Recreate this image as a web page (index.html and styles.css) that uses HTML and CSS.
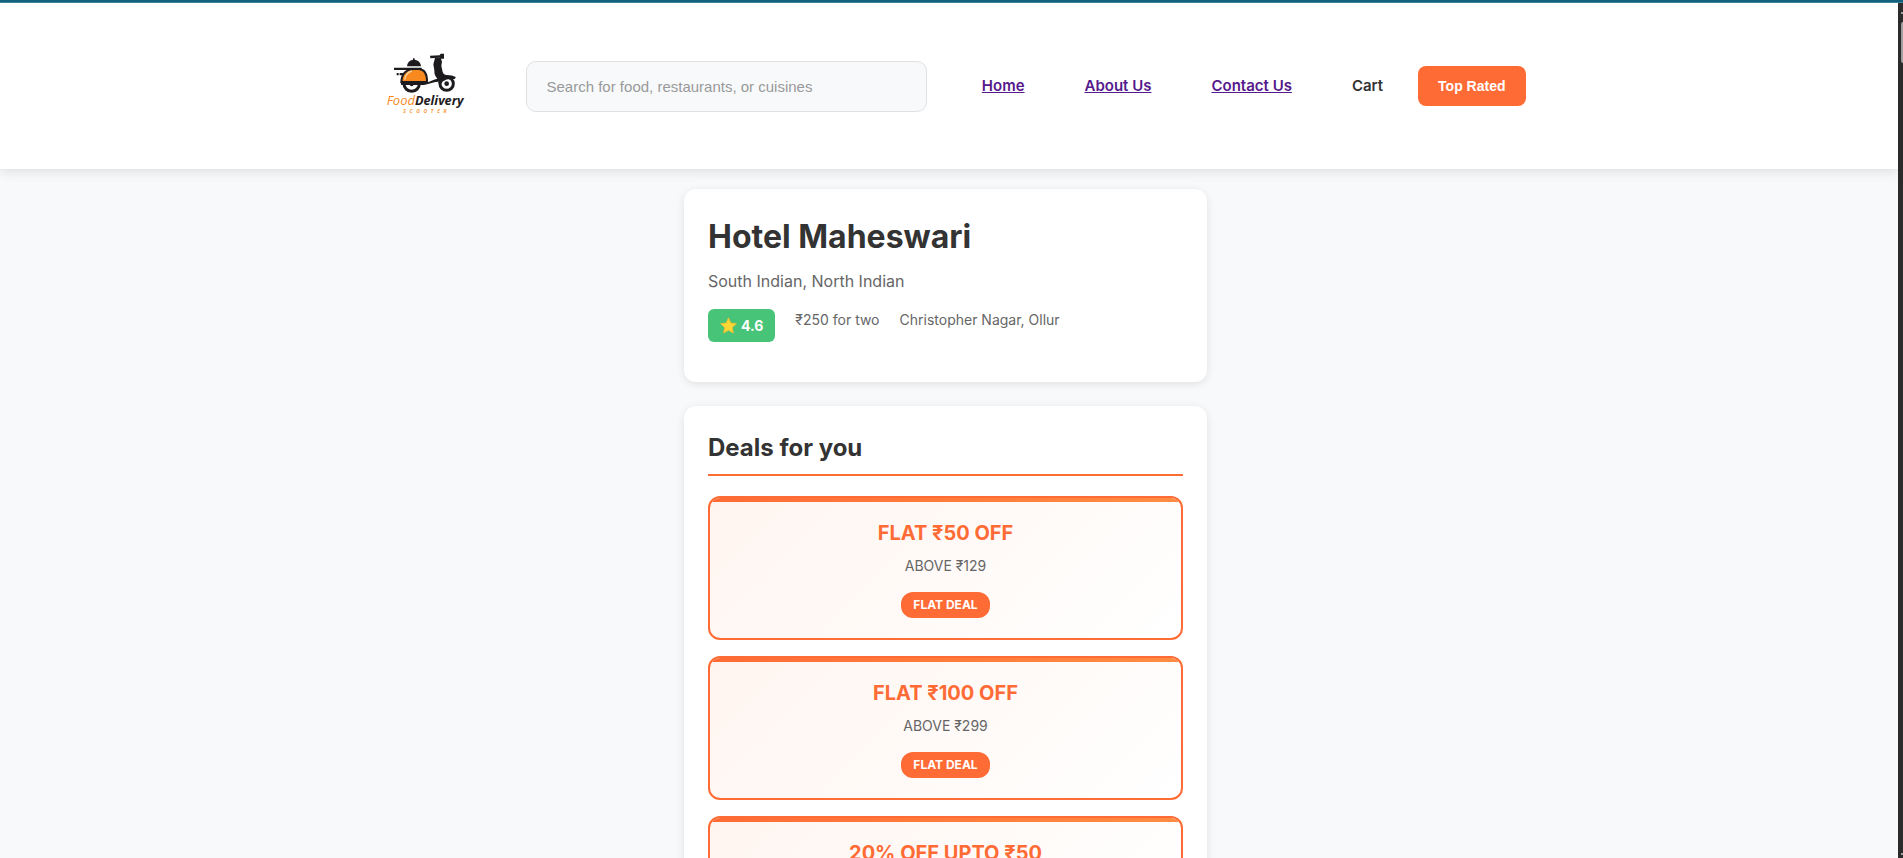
FILE: index.html
```html
<!DOCTYPE html>
<html lang="en">
<head>
<meta charset="utf-8">
<title>Hotel Maheswari</title>
<link rel="stylesheet" href="styles.css">
</head>
<body>
<div class="topline"></div>
<div class="window">
  <div class="page">
    <header class="header">
      <div class="header-inner">
        <svg class="logo" viewBox="-15 -44 360 360" role="img" aria-label="Food Delivery Scooter">
          <g fill="#1d1b1e">
            <path d="M108 77q2-18 18-20v-4h5v4q17 2 19 20z"/>
            <path d="M69 81h83v7H69zM77 97h6v7h-6zM86 97h18v7H86z"/>
            <path d="M177 45l29-1 3-5h10v15h-9l-4-3-28 2z"/>
            <path d="M192 52l17-1 4 12-2 12 4 19q2 8 10 9 20 0 29 6l-2 5q-25-1-35 4-13 7-24 6l-22 6-12 3H91l-2-7h78l22-9 10-3q-10-10-9-25l-3-18z"/>
          </g>
          <path d="M91 124q2-38 39-39h14q25 2 24 39z" fill="#f7891f" stroke="#1d1b1e" stroke-width="6"/>
          <path d="M101 117q4-22 22-26" fill="none" stroke="#ffd29b" stroke-width="4"/>
          <path d="M99 129a23 23 0 0 0 46 0" fill="none" stroke="#1d1b1e" stroke-width="9"/>
          <circle cx="122" cy="131" r="6" fill="#1d1b1e"/>
          <circle cx="227" cy="129" r="20" fill="#fff" stroke="#1d1b1e" stroke-width="9"/>
          <circle cx="227" cy="129" r="7" fill="#1d1b1e"/>
          <path d="M201 127q9-20 33-17l19-1-2 6q-25-2-35 7l-7 9z" fill="#1d1b1e"/>
          <text class="logo-food" x="47" y="194">Food</text>
          <text class="logo-delivery" x="132" y="194">Delivery</text>
          <text class="logo-scooter" x="97" y="216">S C O O T E R</text>
        </svg>
        <input class="search" type="text" aria-label="Search" placeholder="Search for food, restaurants, or cuisines">
        <nav class="nav">
          <a href="#">Home</a>
          <a href="#">About Us</a>
          <a href="#">Contact Us</a>
          <span>Cart</span>
        </nav>
        <button class="top-rated" type="button">Top Rated</button>
      </div>
    </header>
    <main class="main">
      <section class="card">
        <h1 class="name">Hotel Maheswari</h1>
        <p class="cuisines">South Indian, North Indian</p>
        <div class="meta">
          <span class="rating">
            <svg class="star" viewBox="0 0 16 16" aria-hidden="true"><path d="M8 .7l2.2 4.9 5.4.6-4 3.7 1.1 5.3L8 12.500l-4.700 2.700 1.100-5.300-4-3.700 5.400-.6z" fill="#fdd835" stroke="#f4b62f" stroke-width=".6" stroke-linejoin="round"/></svg>
            4.6
          </span>
          <span>₹250 for two</span>
          <span>Christopher Nagar, Ollur</span>
        </div>
      </section>
      <section class="card">
        <h2 class="deals-title">Deals for you</h2>
        <div class="deals">
          <article class="deal">
            <h3>FLAT ₹50 OFF</h3>
            <p>ABOVE ₹129</p>
            <span class="tag">FLAT DEAL</span>
          </article>
          <article class="deal">
            <h3>FLAT ₹100 OFF</h3>
            <p>ABOVE ₹299</p>
            <span class="tag">FLAT DEAL</span>
          </article>
          <article class="deal">
            <h3>20% OFF UPTO ₹50</h3>
          </article>
        </div>
      </section>
    </main>
  </div>
  <div class="scrollbar">
    <span class="arrow-up"></span>
    <span class="thumb"></span>
    <span class="arrow-down"></span>
  </div>
</div>
</body>
</html>
```
FILE: styles.css
```css
* { box-sizing: border-box; margin: 0; padding: 0; }

body {
  display: flex;
  flex-direction: column;
  height: 100vh;
  overflow: hidden;
  font-family: Inter, "Liberation Sans", sans-serif;
  color: #333;
  background: #f8f9fb;
}

.topline {
  flex: none;
  height: 3px;
  background: #13607c;
  border-bottom: 1px solid #3d819b;
}

.window { flex: 1; display: flex; min-height: 0; }
.page { flex: 1; min-width: 0; overflow: hidden; }

.header {
  position: relative;
  padding: 23px 7px 23px 0;
  background: #fff;
  box-shadow: 0 2px 12px rgba(0, 0, 0, 0.12);
}

.header-inner {
  display: flex;
  align-items: center;
  max-width: 1200px;
  margin: 0 auto;
  padding: 0 20px;
}

.logo { flex: none; width: 120px; height: 120px; margin-right: 40px; }
.logo text { font-family: "Open Sans", sans-serif; font-style: italic; }
.logo .logo-food { font-size: 39px; fill: #f7891f; }
.logo .logo-delivery { font-size: 38px; font-weight: 700; fill: #1d1b1e; }
.logo .logo-scooter { font-size: 15px; font-weight: 700; fill: #f79a45; word-spacing: 7px; }

.search {
  flex: 1;
  min-width: 0;
  height: 51px;
  padding: 0 20px;
  border: 1px solid #dfe1e3;
  border-radius: 10px;
  background: #f8f9fb;
  font: 15px "Liberation Sans", Arial, sans-serif;
  color: #333;
}
.search::placeholder { color: #999; }

.nav {
  display: flex;
  gap: 60px;
  margin: 0 35px 0 55px;
  font-size: 15px;
  font-weight: 600;
  line-height: 24px;
  white-space: nowrap;
}
.nav a { color: #551a8b; }

.top-rated {
  height: 40px;
  padding: 0 20px;
  border: 0;
  border-radius: 8px;
  background: #ff6b35;
  color: #fff;
  font: 700 14px "Liberation Sans", Arial, sans-serif;
  white-space: nowrap;
}

.main {
  display: flex;
  flex-direction: column;
  align-items: center;
  gap: 24px;
  padding: 20px 7px 24px 0;
}

.card {
  width: 100%;
  max-width: 523px;
  padding: 24px;
  border-radius: 12px;
  background: #fff;
  box-shadow: 0 2px 8px rgba(0, 0, 0, 0.1);
}

.name { font-size: 32px; line-height: 48px; margin-bottom: 8px; }
.cuisines { font-size: 16px; line-height: 24px; margin-bottom: 16px; color: #666; }

.meta {
  display: flex;
  align-items: flex-start;
  gap: 20px;
  margin-bottom: 16px;
  font-size: 14px;
  line-height: 21px;
  color: #666;
}
.rating {
  display: flex;
  align-items: center;
  gap: 4px;
  padding: 6px 12px;
  border-radius: 6px;
  background: #48c479;
  color: #fff;
  font-weight: 700;
}
.star { width: 17px; height: 17px; }

.deals-title {
  padding-bottom: 8px;
  margin-bottom: 20px;
  border-bottom: 2px solid #ff6b35;
  font-size: 24px;
  line-height: 36px;
}

.deals { display: flex; flex-direction: column; gap: 16px; }

.deal {
  position: relative;
  overflow: hidden;
  padding: 20px;
  border: 2px solid #ff6b35;
  border-radius: 12px;
  background: linear-gradient(135deg, #fff5f0, #fff);
  text-align: center;
}
.deal::before {
  content: "";
  position: absolute;
  inset: 0 0 auto;
  height: 4px;
  background: linear-gradient(90deg, #ff6b35, #ff8c42);
}
.deal h3 { font-size: 20px; line-height: 30px; margin-bottom: 8px; color: #ff6b35; }
.deal p { font-size: 14px; line-height: 20px; margin-bottom: 16px; color: #666; }

.tag {
  display: block;
  width: fit-content;
  margin: 0 auto;
  padding: 4px 12px;
  border-radius: 12px;
  background: #ff6b35;
  color: #fff;
  font-size: 12px;
  font-weight: 700;
  line-height: 18px;
}

.scrollbar {
  display: flex;
  flex-direction: column;
  align-items: flex-end;
  width: 5px;
  padding: 9px 0 3px;
  background: #2b2b2b;
}
.arrow-up, .arrow-down { width: 2px; height: 2px; background: #9f9f9f; }
.thumb {
  width: 2px;
  height: 41px;
  margin-top: 8px;
  border-radius: 2px 0 0 2px;
  background: #9f9f9f;
}
.arrow-down { margin-top: auto; }
```
